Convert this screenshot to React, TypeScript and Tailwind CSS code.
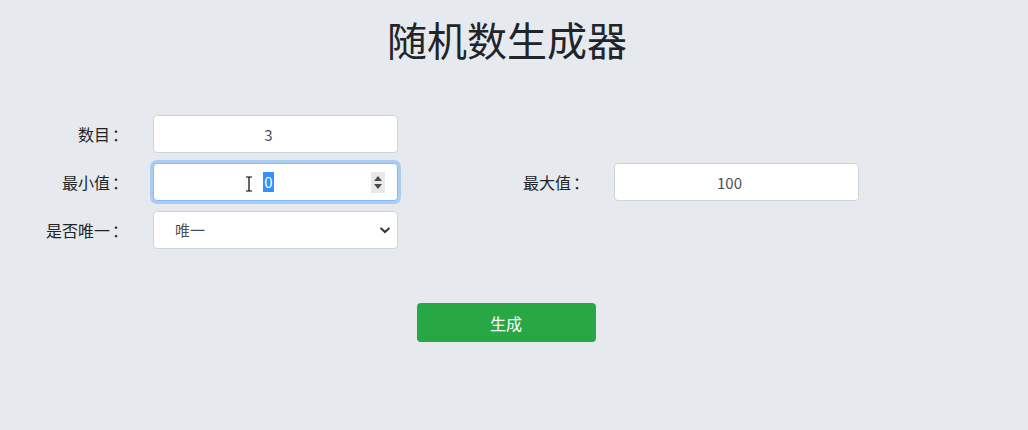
import { useState } from 'react'

const font = { fontFamily: '"Noto Sans CJK SC", "Noto Sans", sans-serif' }

// 向下箭頭（select 用）
function Chevron() {
  return (
    <svg width="10" height="7" viewBox="0 0 10 7" className="absolute right-[8px] top-[16px]">
      <path d="M1.2 1.4 L5 5 L8.8 1.4" fill="none" stroke="#343a40" strokeWidth="2" strokeLinecap="round" />
    </svg>
  )
}

function Label({ text }: { text: string }) {
  return (
    <div className="flex w-[107px] shrink-0 justify-end whitespace-nowrap pr-[25px] text-[16px] text-[#212529]">
      <span>{text}</span>
      <span className="ml-[2px]">：</span>
    </div>
  )
}

export default function App() {
  const [count] = useState('3')
  const [max] = useState('100')
  const [unique] = useState('唯一')

  return (
    <div className="h-[430px] w-full bg-[#e6e9ee]" style={font}>
      <div className="w-[1014px]">
        <h1 className="pt-[10px] text-center text-[40px] leading-[58px] font-normal text-[#212529]">
          随机数生成器
        </h1>

        <div className="mx-auto mt-[47px] grid w-[922px] grid-cols-2 gap-y-[10px]">
          {/* 數目 */}
          <div className="flex items-center">
            <Label text="数目" />
            <input
              readOnly
              value={count}
              className="h-[38px] w-[245px] rounded-[4px] border border-[#ced4da] bg-white pr-[14px] text-center text-[15px] text-[#495057] outline-none"
            />
          </div>
          <div />

          {/* 最小值（聚焦中） */}
          <div className="flex items-center">
            <Label text="最小值" />
            <div className="relative flex h-[38px] w-[245px] items-center rounded-[4px] border border-[#80bdff] bg-white shadow-[0_0_0_3px_rgba(0,123,255,0.25)]">
              <div className="flex flex-1 justify-center pl-[12px] text-[15px] leading-[20px]">
                <span className="bg-[#3390ff] px-[1px] text-white">0</span>
              </div>
              <div className="mr-[12px] flex h-[21px] w-[14px] flex-col items-center justify-center gap-[3px] bg-[#e9e9e9]">
                <svg width="8" height="5" viewBox="0 0 8 5"><path d="M0 5 L4 0 L8 5 Z" fill="#4a4a4a" /></svg>
                <svg width="8" height="5" viewBox="0 0 8 5"><path d="M0 0 L4 5 L8 0 Z" fill="#4a4a4a" /></svg>
              </div>
              {/* 滑鼠 I 形游標 */}
              <svg width="8" height="16" viewBox="0 0 8 16" className="absolute left-[91px] top-[12px]">
                <path d="M1 1 H7 M4 1 V15 M1 15 H7" fill="none" stroke="#000" strokeWidth="1.2" />
              </svg>
            </div>
          </div>

          {/* 最大值 */}
          <div className="flex items-center">
            <Label text="最大值" />
            <input
              readOnly
              value={max}
              className="h-[38px] w-[245px] rounded-[4px] border border-[#ced4da] bg-white pr-[14px] text-center text-[15px] text-[#495057] outline-none"
            />
          </div>

          {/* 是否唯一 */}
          <div className="flex items-center">
            <Label text="是否唯一" />
            <div className="relative h-[38px] w-[245px]">
              <select
                value={unique}
                onChange={() => {}}
                className="h-full w-full appearance-none rounded-[4px] border border-[#ced4da] bg-white pl-[21px] text-[15px] text-[#495057] outline-none"
                style={font}
              >
                <option value="唯一">唯一</option>
                <option value="不唯一">不唯一</option>
              </select>
              <Chevron />
            </div>
          </div>
          <div />
        </div>

        <div className="mt-[54px] flex justify-center pr-[2px]">
          <button className="h-[39px] w-[179px] rounded-[4px] bg-[#28a745] text-[16px] text-white">
            生成
          </button>
        </div>
      </div>
    </div>
  )
}
